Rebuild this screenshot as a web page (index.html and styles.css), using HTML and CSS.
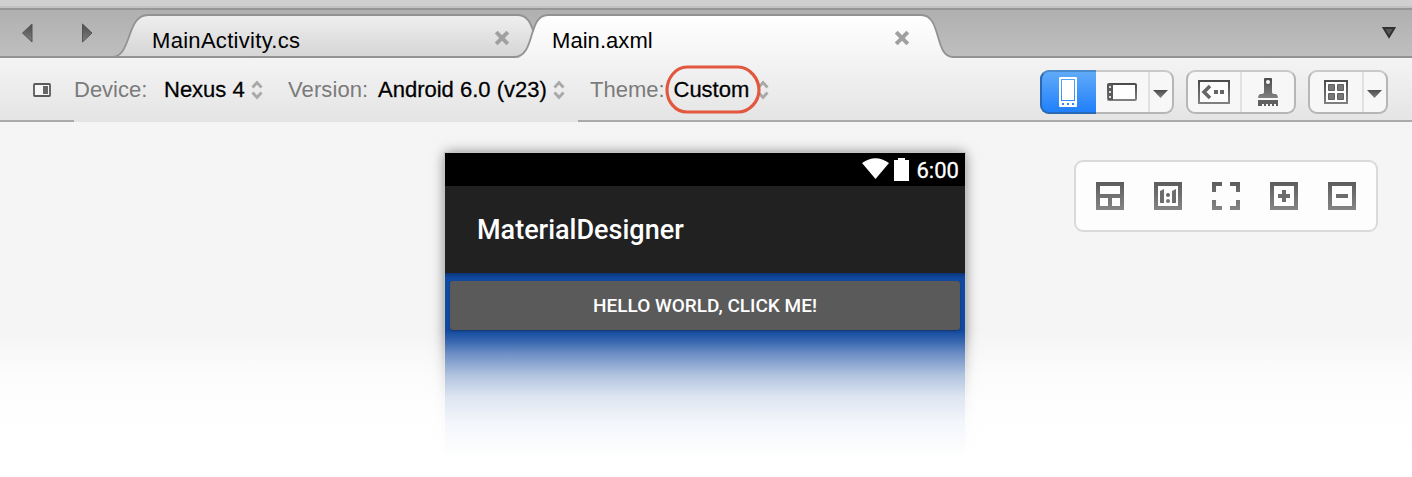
FILE: index.html
```html
<!DOCTYPE html>
<html lang="en">
<head>
<meta charset="utf-8">
<title>Main.axml</title>
<link rel="stylesheet" href="styles.css">
</head>
<body>
<svg class="defs" width="0" height="0" aria-hidden="true">
  <defs>
    <linearGradient id="ink" x1="0" y1="0" x2="0" y2="1"><stop offset="0" stop-color="#4c4c4c"/><stop offset="1" stop-color="#808080"/></linearGradient>
    <linearGradient id="idle" x1="0" y1="0" x2="0" y2="1"><stop offset="0" stop-color="#efefef"/><stop offset="1" stop-color="#d5d5d5"/></linearGradient>
    <linearGradient id="front" x1="0" y1="0" x2="0" y2="1"><stop offset="0" stop-color="#fff"/><stop offset="1" stop-color="#f4f4f4"/></linearGradient>
    <linearGradient id="ink-canvas" gradientUnits="userSpaceOnUse" x1="0" y1="0" x2="0" y2="28"><stop offset="0" stop-color="#5c5c5c"/><stop offset="1" stop-color="#858585"/></linearGradient>
  </defs>
</svg>
<div class="window-edge"></div>
<header class="tabs">
  <svg class="tab-shapes" width="1412" height="50" viewBox="0 10 1412 50">
    <path d="M112 57C132 57 126 15 148 15H517C531 15 531 27 534 35L534 57Z" fill="url(#idle)"/>
    <path d="M0 57H112C132 57 126 15 148 15H517C528 15 531 24 534 33" fill="none" stroke="#929292" stroke-width="1.8"/>
    <path d="M510 60C538 60 526 15 548 15H921C942 15 934 57 953 57V60Z" fill="url(#front)"/>
    <path d="M112 57H514C536 57 527 15 548 15H921C942 15 934 57 953 57H1412" fill="none" stroke="#929292" stroke-width="1.8"/>
  </svg>
  <nav class="history">
    <svg width="12" height="20" viewBox="0 0 12 20"><path d="M.5 10 10 1V19Z" fill="url(#ink)" stroke="#555"/></svg>
    <svg width="12" height="20" viewBox="0 0 12 20"><path d="M.5 1 10 10 .5 19Z" fill="url(#ink)" stroke="#555"/></svg>
  </nav>
  <div class="tab tab-first"><span>MainActivity.cs</span><svg class="close" width="16" height="16" viewBox="0 0 16 16"><path d="M2.2 2.2 13.8 13.8M13.8 2.2 2.2 13.8"/></svg></div>
  <div class="tab tab-second"><span>Main.axml</span><svg class="close" width="16" height="16" viewBox="0 0 16 16"><path d="M2.2 2.2 13.8 13.8M13.8 2.2 2.2 13.8"/></svg></div>
  <svg class="overflow" width="14" height="12" viewBox="0 0 14 12"><path d="M1.5 1H12.500L7 10Z" fill="#555" stroke="#303030" stroke-width="1.900"/></svg>
</header>
<section class="toolbar">
  <svg class="panel-icon" width="18" height="14" viewBox="0 0 18 14"><rect x="1" y="1" width="16" height="12" rx=".7" fill="#f6f6f6" stroke="#5b5b5b" stroke-width="1.8"/><rect x="10" y="3" width="5" height="8" fill="#666"/></svg>
  <div class="field field-device"><span class="label">Device:</span><span class="value">Nexus 4</span><svg class="step" width="12" height="20" viewBox="0 0 12 20"><path d="M1.500 7.500 6 2.500l4.500 5M1.500 12.500l4.500 5 4.500-5"/></svg></div>
  <div class="field field-version"><span class="label">Version:</span><span class="value">Android 6.0 (v23)</span><svg class="step" width="12" height="20" viewBox="0 0 12 20"><path d="M1.500 7.500 6 2.500l4.500 5M1.500 12.500l4.500 5 4.500-5"/></svg></div>
  <div class="field field-theme"><span class="label">Theme:</span><span class="value">Custom</span><svg class="step" width="12" height="20" viewBox="0 0 12 20"><path d="M1.500 7.500 6 2.500l4.500 5M1.500 12.500l4.500 5 4.500-5"/></svg>
    <svg class="highlight" width="96" height="50" viewBox="0 0 96 50"><path d="M22 2H73C85 2 94 14 94 25S85 47 73 47H22C10 47 2 36 2 25S10 2 22 2Z"/></svg>
  </div>
  <div class="groups">
    <div class="group group-orient">
      <span class="seg selected"><svg width="18" height="30" viewBox="0 0 18 30"><path fill-rule="evenodd" fill="#fff" d="M1 0H17Q18 0 18 1V29Q18 30 17 30H1Q0 30 0 29V1Q0 0 1 0ZM2 2V24H16V2ZM3 26V28H5V26ZM8 26V28H10V26ZM13 26V28H15V26Z"/><path fill="#fff" d="M3 3H15V23H3Z"/></svg></span>
      <span class="seg seg-land"><svg width="30" height="18" viewBox="0 0 30 18"><rect x="1" y="1" width="28" height="16" rx="1" fill="#fff" stroke="url(#ink)" stroke-width="2"/><path d="M1 1H6V17H1Z" fill="#5b5b5b"/><path d="M2 3H4V5H2ZM2 8H4V10H2ZM2 13H4V15H2Z" fill="#ddd"/></svg></span>
      <span class="seg seg-arrow"><svg width="16" height="8" viewBox="0 0 16 8"><path d="M0 0H15L7.500 8Z" fill="url(#ink)"/></svg></span>
    </div>
    <div class="group group-edit">
      <span class="seg seg-code"><svg width="32" height="24" viewBox="0 0 32 24"><rect x="1" y="1" width="30" height="22" fill="#fcfcfc" stroke="url(#ink)" stroke-width="2"/><path d="M12 6 6 12l6 6" fill="none" stroke="#666" stroke-width="3.500"/><path d="M16 10H20V14H16ZM22 10H26V14H22Z" fill="#656565"/></svg></span>
      <span class="seg seg-brush"><svg width="20" height="28" viewBox="0 0 20 28"><path fill="url(#ink)" fill-rule="evenodd" d="M6 1Q6 0 7 0H13Q14 0 14 1V14Q14 16 16 16H18Q20 17 20 20H0Q0 17 2 16H4Q6 16 6 14ZM8 4A2 2 0 0 0 12 4A2 2 0 0 0 8 4Z"/><path fill="#606060" d="M0 22H20V28H18V26H16V28H14V26H12V28H10V26H8V28H6V26H4V28H0Z"/></svg></span>
    </div>
    <div class="group group-grid">
      <span class="seg seg-panes"><svg width="24" height="24" viewBox="0 0 24 24"><rect x="1" y="1" width="22" height="22" fill="#fff" stroke="url(#ink)" stroke-width="2"/><path fill="#777" stroke="#606060" d="M4.500 4.500H10.500V10.500H4.500ZM13.500 4.500H19.500V10.500H13.500ZM4.500 13.500H10.500V19.500H4.500ZM13.500 13.500H19.500V19.500H13.500Z"/></svg></span>
      <span class="seg seg-arrow"><svg width="16" height="8" viewBox="0 0 16 8"><path d="M0 0H15L7.500 8Z" fill="url(#ink)"/></svg></span>
    </div>
  </div>
</section>
<main class="canvas">
  <div class="phone">
    <div class="status">
      <svg width="27" height="22" viewBox="0 0 27 22"><path d="M0 5Q13.500-4.500 27 5L13.500 21Z" fill="#fff"/></svg>
      <svg width="15" height="23" viewBox="0 0 15 23"><path d="M0 2H4V0H11V2H15V23H0Z" fill="#fff"/></svg>
      <span>6:00</span>
    </div>
    <div class="appbar">MaterialDesigner</div>
    <div class="content"><div class="button">HELLO WORLD, CLICK ME!</div></div>
  </div>
  <div class="fade"></div>
  <div class="zoom-tools">
    <svg width="28" height="28" viewBox="0 0 28 28"><path fill="url(#ink-canvas)" fill-rule="evenodd" d="M0 0H28V28H0ZM4 4V12H24V4ZM4 16V24H12V16ZM16 16V24H24V16Z"/></svg>
    <svg width="28" height="28" viewBox="0 0 28 28"><path fill="url(#ink-canvas)" fill-rule="evenodd" d="M0 0H28V28H0ZM4 4V24H24V4Z"/><path fill="#6c6c6c" d="M6 9 10 7V21H6ZM18 9 22 7V21H18Z"/><circle cx="14" cy="13" r="2" fill="#666"/><circle cx="14" cy="19" r="2" fill="#777"/></svg>
    <svg width="28" height="28" viewBox="0 0 28 28"><path fill="url(#ink-canvas)" d="M0 0H10V4H4V10H0ZM18 0H28V10H24V4H18ZM0 18H4V24H10V28H0ZM24 18H28V28H18V24H24Z"/></svg>
    <svg width="28" height="28" viewBox="0 0 28 28"><path fill="url(#ink-canvas)" fill-rule="evenodd" d="M0 0H28V28H0ZM4 4V24H24V4Z"/><path fill="#6c6c6c" d="M12 8H16V12H20V16H16V20H12V16H8V12H12Z"/></svg>
    <svg width="28" height="28" viewBox="0 0 28 28"><path fill="url(#ink-canvas)" fill-rule="evenodd" d="M0 0H28V28H0ZM4 4V24H24V4Z"/><path fill="#6c6c6c" d="M8 12H20V16H8Z"/></svg>
  </div>
</main>
</body>
</html>
```
FILE: styles.css
```css
* { box-sizing: border-box; }
body {
  margin: 0;
  width: 1412px;
  height: 477px;
  overflow: hidden;
  background: #fff;
  font-family: "Liberation Sans", Arial, sans-serif;
  font-size: 22px;
  white-space: nowrap;
}
svg { display: block; flex: none; }
.defs { position: absolute; }
.window-edge {
  height: 10px;
  background: linear-gradient(#d0d0d0 0 6px, #c2c2c2 6px 8px, #969696 8px);
}
.tabs {
  position: relative;
  display: flex;
  height: 48px;
  background: linear-gradient(#b0b0b0, #bfbfbf);
}
.tab-shapes { position: absolute; left: 0; top: 0; z-index: 1; }
.history {
  position: relative;
  z-index: 2;
  display: flex;
  gap: 48px;
  width: 152px;
  padding: 13px 0 0 22px;
}
.tab {
  position: relative;
  z-index: 2;
  display: flex;
  justify-content: space-between;
  width: 358px;
  padding-top: 18px;
  line-height: 25px;
}
.tab-second { margin-left: 42px; }
.tab-first span { letter-spacing: .3px; }
.tab-second span { letter-spacing: .05px; }
.close { margin-top: 2px; }
.close path { fill: none; stroke: #a0a0a0; stroke-width: 4; }
.overflow { position: relative; z-index: 2; margin: 17px 0 0 472px; }
.toolbar {
  position: relative;
  display: flex;
  height: 64px;
  padding-left: 33px;
  background:
    linear-gradient(#aaa, #aaa) 0 62px / 74px 2px no-repeat,
    linear-gradient(#aaa, #aaa) 578px 62px / 834px 2px no-repeat,
    linear-gradient(#f4f4f4, #e4e4e4);
}
.panel-icon { margin-top: 25px; }
.field { position: relative; display: flex; align-items: center; height: 64px; }
.field-device { margin-left: 23px; width: 214px; }
.field-version { width: 302px; }
.field-theme { width: 180px; }
.label { color: #7b7b7b; }
.field-device .label { width: 90px; }
.field-version .label { width: 90px; letter-spacing: .1px; }
.field-theme .label { width: 83.5px; }
.value { color: #000; text-shadow: 0 1px #fff; -webkit-text-stroke: .3px #000; }
.step { margin-left: 6px; }
.field-theme .step { margin-left: 8px; }
.step path { fill: none; stroke: #a8a8a8; stroke-width: 2.8; }
.highlight { position: absolute; left: 74.5px; top: 7px; }
.highlight path { fill: none; stroke: #e2583e; stroke-width: 3.2; }
.groups { display: flex; gap: 12px; margin: 12px 0 0 270px; }
.group {
  display: flex;
  height: 44px;
  border: 2px solid #b6b6b6;
  border-top-color: #c9c9c9;
  border-radius: 9px;
  background: #f7f7f7;
}
.seg { display: flex; align-items: center; justify-content: center; }
.group-orient { width: 134px; }
.selected {
  width: 56px;
  height: 44px;
  margin: -2px 0 0 -2px;
  padding-right: 2px;
  border: 2px solid #2869b5;
  border-top-color: #4b8cd1;
  border-right: 0;
  border-radius: 9px 0 0 9px;
  background: linear-gradient(#60aaf8, #2080fb);
}
.seg-land { width: 52px; }
.seg-arrow { flex: 1; border-left: 2px solid #e1e1e1; padding: 3px 1px 0 0; }
.group-edit { width: 110px; }
.seg-code { width: 52px; padding-right: 1px; }
.seg-brush { flex: 1; border-left: 2px solid #e1e1e1; padding-right: 1px; }
.group-grid { width: 80px; }
.seg-panes { width: 52px; }
.canvas {
  position: relative;
  height: 355px;
  padding: 31px 0 0 445px;
  background: #f5f5f5;
  overflow: hidden;
}
.phone {
  width: 520px;
  height: 350px;
  background: #1149a0;
  box-shadow: 0 0 0 1px #c4c4c4, 0 0 12px rgba(0, 0, 0, .5);
  color: #fff;
  font-family: Roboto, sans-serif;
}
.status {
  display: flex;
  height: 33px;
  padding: 5px 0 0 417px;
  background: #000;
}
.status svg + svg { margin-left: 5px; }
.status span { margin-left: 7.5px; font-size: 22px; line-height: 26px; -webkit-text-stroke: .3px #fff; }
.appbar {
  height: 87px;
  padding: 1px 0 0 32px;
  background: #212121;
  font-size: 27px;
  font-weight: 500;
  line-height: 87px;
}
.content {
  padding: 8px 5px 0;
  background: linear-gradient(#0a3475, #1149a0 5px);
}
.button {
  height: 49px;
  border-radius: 3px;
  background: #5a5a5b;
  box-shadow: 0 1px 2px #17366a;
  font-size: 19px;
  font-weight: 500;
  line-height: 49px;
  text-align: center;
}
.fade {
  position: absolute;
  inset: 208px 0 0;
  background: linear-gradient(
    rgba(255, 255, 255, 0), rgba(255, 255, 255, .12) 9px,
    rgba(255, 255, 255, .39) 24px, rgba(255, 255, 255, .67) 45px,
    rgba(255, 255, 255, .86) 67px, rgba(255, 255, 255, .95) 92px,
    #fff 127px);
}
.zoom-tools {
  position: absolute;
  left: 1074px;
  top: 38px;
  display: flex;
  gap: 30px;
  width: 304px;
  height: 72px;
  padding: 20px;
  border: 2px solid #dadada;
  border-radius: 9px;
  background: #fdfdfd;
}
```
